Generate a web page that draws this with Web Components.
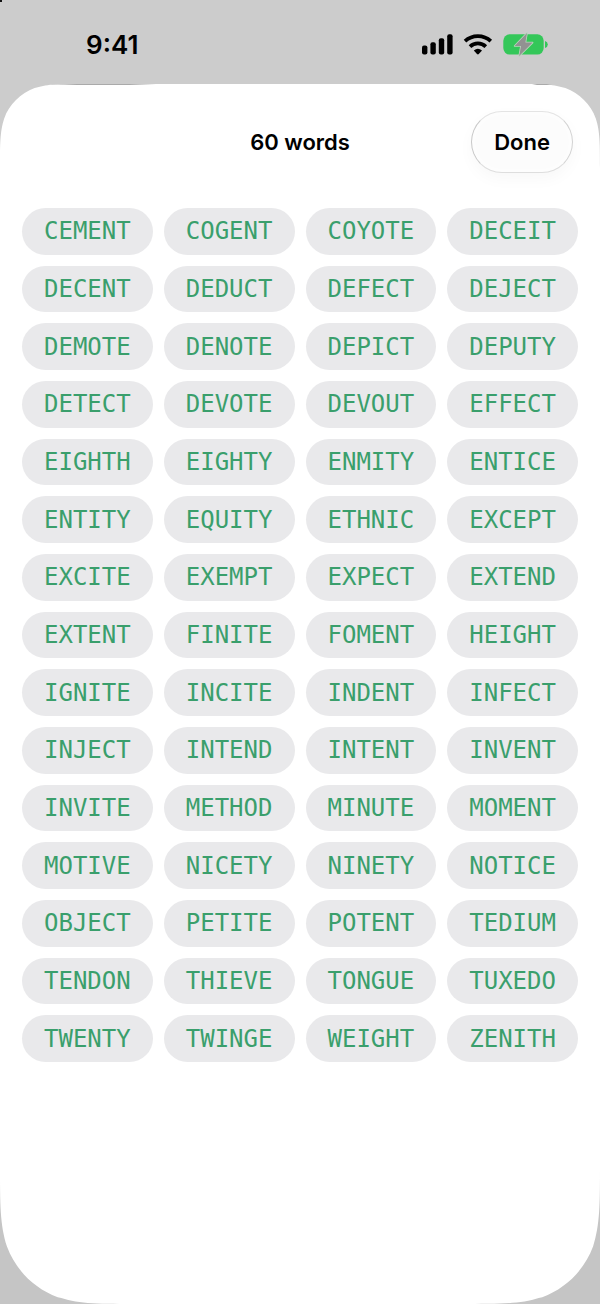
<!DOCTYPE html>
<html lang="en">
<head>
  <meta charset="UTF-8">
  <meta name="viewport" content="width=device-width, initial-scale=1">
  <title>60 words</title>
  <style>
    body {
      margin: 0;
      background: linear-gradient(#cccccc 50%, #c5c5c5 90%);
      font-family: Inter, "Liberation Sans", sans-serif;
      color: #000;
    }
  </style>
</head>
<body>
  <word-screen></word-screen>

  <script>
    class StatusBar extends HTMLElement {
      constructor() {
        super();
        this.attachShadow({ mode: 'open' });
        this.shadowRoot.innerHTML = `
          <style>
            :host {
              display: flex;
              align-items: center;
              justify-content: space-between;
              height: 84px;
              padding: 5px 52px 0 86px;
              box-sizing: border-box;
              font-size: 26px;
              font-weight: 600;
              line-height: 32px;
            }
            .icons {
              display: flex;
              align-items: center;
              gap: 10px;
            }
            svg {
              display: block;
              overflow: visible;
            }
          </style>
          <time><slot></slot></time>
          <div class="icons">
            <svg width="32" height="22" viewBox="0 0 32 22" role="img" aria-label="Signal">
              <rect x="0" y="11.4" width="5.4" height="9" rx="2"/>
              <rect x="8.4" y="8.3" width="5.4" height="12.1" rx="2"/>
              <rect x="16.8" y="4.3" width="5.4" height="16.1" rx="2"/>
              <rect x="25.2" y="0.3" width="5.4" height="20.1" rx="2"/>
            </svg>
            <svg width="29" height="22" viewBox="0 0 29 22" fill="none" stroke="#000" stroke-width="3.7" role="img" aria-label="Wi-Fi">
              <path d="M1 7.2A19 19 0 0 1 26.8 7.2"/>
              <path d="M6 12.6A11.4 11.4 0 0 1 21.8 12.6"/>
              <path d="M9.8 16.6Q13.9 13 18 16.6L14.8 20Q13.9 20.8 13 20Z" fill="#000" stroke="none"/>
            </svg>
            <svg width="45" height="22" viewBox="0 0 45 22" role="img" aria-label="Battery charging">
              <rect x="0.3" y="0.3" width="40.4" height="20.2" rx="6.4" fill="#34c759"/>
              <path d="M42 6.9Q44.8 7.8 44.8 10.5T42 14.1Z" fill="#34c759"/>
              <path d="M24 -1L11.6 12H18L16.2 22L29.6 8.6H22.4Z" fill="#929292" stroke="#b9d6bc" stroke-width="1.6" stroke-linejoin="round" paint-order="stroke"/>
            </svg>
          </div>
        `;
      }
    }

    class SheetCorner extends HTMLElement {
      constructor() {
        super();
        this.attachShadow({ mode: 'open' });
        // Area left outside a continuous corner, in units of its radius
        this.shadowRoot.innerHTML = `
          <style>
            :host {
              display: block;
              position: absolute;
              pointer-events: none;
            }
            svg {
              display: block;
              width: 100%;
              height: 100%;
            }
          </style>
          <svg viewBox="0 0 1.53 1.53" fill="currentColor" aria-hidden="true">
            <path d="M0 0H1.53C1.088 0 .868 0 .67 .065L.631 .075C.373 .169 .169 .373 .075 .631C0 .868 0 1.088 0 1.53Z"/>
          </svg>
        `;
      }
    }

    class WordSheet extends HTMLElement {
      constructor() {
        super();
        this.attachShadow({ mode: 'open' });
        this.shadowRoot.innerHTML = `
          <style>
            :host {
              display: flex;
              flex-direction: column;
              position: relative;
              background: #fff;
            }
            sheet-corner {
              width: 84px;
              height: 84px;
              color: #ccc;
            }
            .tl { top: 0; left: 0; }
            .tr { top: 0; right: 0; transform: scaleX(-1); }
            .bl { bottom: 0; left: 0; transform: scaleY(-1); }
            .br { bottom: 0; right: 0; transform: scale(-1); }
            .bl, .br {
              width: 140px;
              height: 140px;
              color: #c5c5c5;
            }
            .edge {
              position: absolute;
              top: 0;
              left: 50px;
              width: 106px;
              height: 1px;
              background: linear-gradient(90deg, transparent, #aaa 25%, #aaa 75%, transparent);
            }
            .edge.right {
              left: auto;
              right: 48px;
              width: 20px;
            }
            header {
              display: grid;
              grid-template-columns: 1fr auto 1fr;
              align-items: center;
              padding: 27px 27px 0;
            }
            h1 {
              grid-column: 2;
              margin: 0;
              font-size: 22px;
              font-weight: 600;
              line-height: 28px;
            }
            button {
              justify-self: end;
              height: 62px;
              padding: 0 22px;
              border: 1px solid;
              border-color: #e4e4e4 #d2d2d2 #dedede #c8c8c8;
              border-radius: 31px;
              background: #fcfcfc;
              box-shadow: 0 6px 16px rgba(0, 0, 0, 0.03), inset 0 0 8px #fff;
              color: #000;
              font-family: inherit;
              font-size: 22px;
              font-weight: 600;
              line-height: 28px;
              cursor: pointer;
            }
            main {
              display: flex;
              flex: 1;
              flex-direction: column;
              padding: 35px 22px 242px;
            }
          </style>
          <header>
            <h1><slot name="title"></slot></h1>
            <button type="button">Done</button>
          </header>
          <main><slot></slot></main>
          <sheet-corner class="tl"></sheet-corner>
          <sheet-corner class="tr"></sheet-corner>
          <sheet-corner class="bl"></sheet-corner>
          <sheet-corner class="br"></sheet-corner>
          <div class="edge"></div>
          <div class="edge right"></div>
        `;
      }
    }

    class WordChip extends HTMLElement {
      constructor() {
        super();
        this.attachShadow({ mode: 'open' });
        this.shadowRoot.innerHTML = `
          <style>
            :host {
              display: flex;
              align-items: center;
              justify-content: center;
              min-height: 44px;
              border-radius: 24px;
              background: #e9e9eb;
              color: #3a9f6c;
              font-family: "DejaVu Sans Mono", "Liberation Mono", monospace;
              font-size: 24px;
              line-height: 28px;
            }
          </style>
          <slot></slot>
        `;
      }
    }

    class WordGrid extends HTMLElement {
      constructor() {
        super();
        this.attachShadow({ mode: 'open' });
        this.shadowRoot.innerHTML = `
          <style>
            :host {
              display: grid;
              flex: 1;
              grid-template-columns: repeat(4, 1fr);
              grid-auto-rows: 1fr;
              gap: 11px;
            }
          </style>
        `;
      }

      static get observedAttributes() {
        return ['words'];
      }

      attributeChangedCallback(attrName, oldValue, newValue) {
        this.renderWords(newValue);
      }

      renderWords(words) {
        this.shadowRoot.querySelectorAll('word-chip').forEach(chip => chip.remove());
        words.trim().split(/\s+/).forEach(word => {
          const chip = document.createElement('word-chip');
          chip.textContent = word;
          this.shadowRoot.appendChild(chip);
        });
      }
    }

    class WordScreen extends HTMLElement {
      constructor() {
        super();
        this.attachShadow({ mode: 'open' });
        this.shadowRoot.innerHTML = `
          <style>
            :host {
              display: flex;
              flex-direction: column;
              position: relative;
              min-height: 100vh;
            }
            :host::before {
              content: '';
              position: absolute;
              top: 0;
              left: 0;
              width: 2px;
              height: 2px;
              background: #111;
            }
            word-sheet {
              flex: 1;
            }
          </style>
          <status-bar>9:41</status-bar>
          <word-sheet>
            <span slot="title">60 words</span>
            <word-grid words="
              CEMENT COGENT COYOTE DECEIT
              DECENT DEDUCT DEFECT DEJECT
              DEMOTE DENOTE DEPICT DEPUTY
              DETECT DEVOTE DEVOUT EFFECT
              EIGHTH EIGHTY ENMITY ENTICE
              ENTITY EQUITY ETHNIC EXCEPT
              EXCITE EXEMPT EXPECT EXTEND
              EXTENT FINITE FOMENT HEIGHT
              IGNITE INCITE INDENT INFECT
              INJECT INTEND INTENT INVENT
              INVITE METHOD MINUTE MOMENT
              MOTIVE NICETY NINETY NOTICE
              OBJECT PETITE POTENT TEDIUM
              TENDON THIEVE TONGUE TUXEDO
              TWENTY TWINGE WEIGHT ZENITH
            "></word-grid>
          </word-sheet>
        `;
      }
    }

    customElements.define('status-bar', StatusBar);
    customElements.define('sheet-corner', SheetCorner);
    customElements.define('word-chip', WordChip);
    customElements.define('word-grid', WordGrid);
    customElements.define('word-sheet', WordSheet);
    customElements.define('word-screen', WordScreen);
  </script>
</body>
</html>
